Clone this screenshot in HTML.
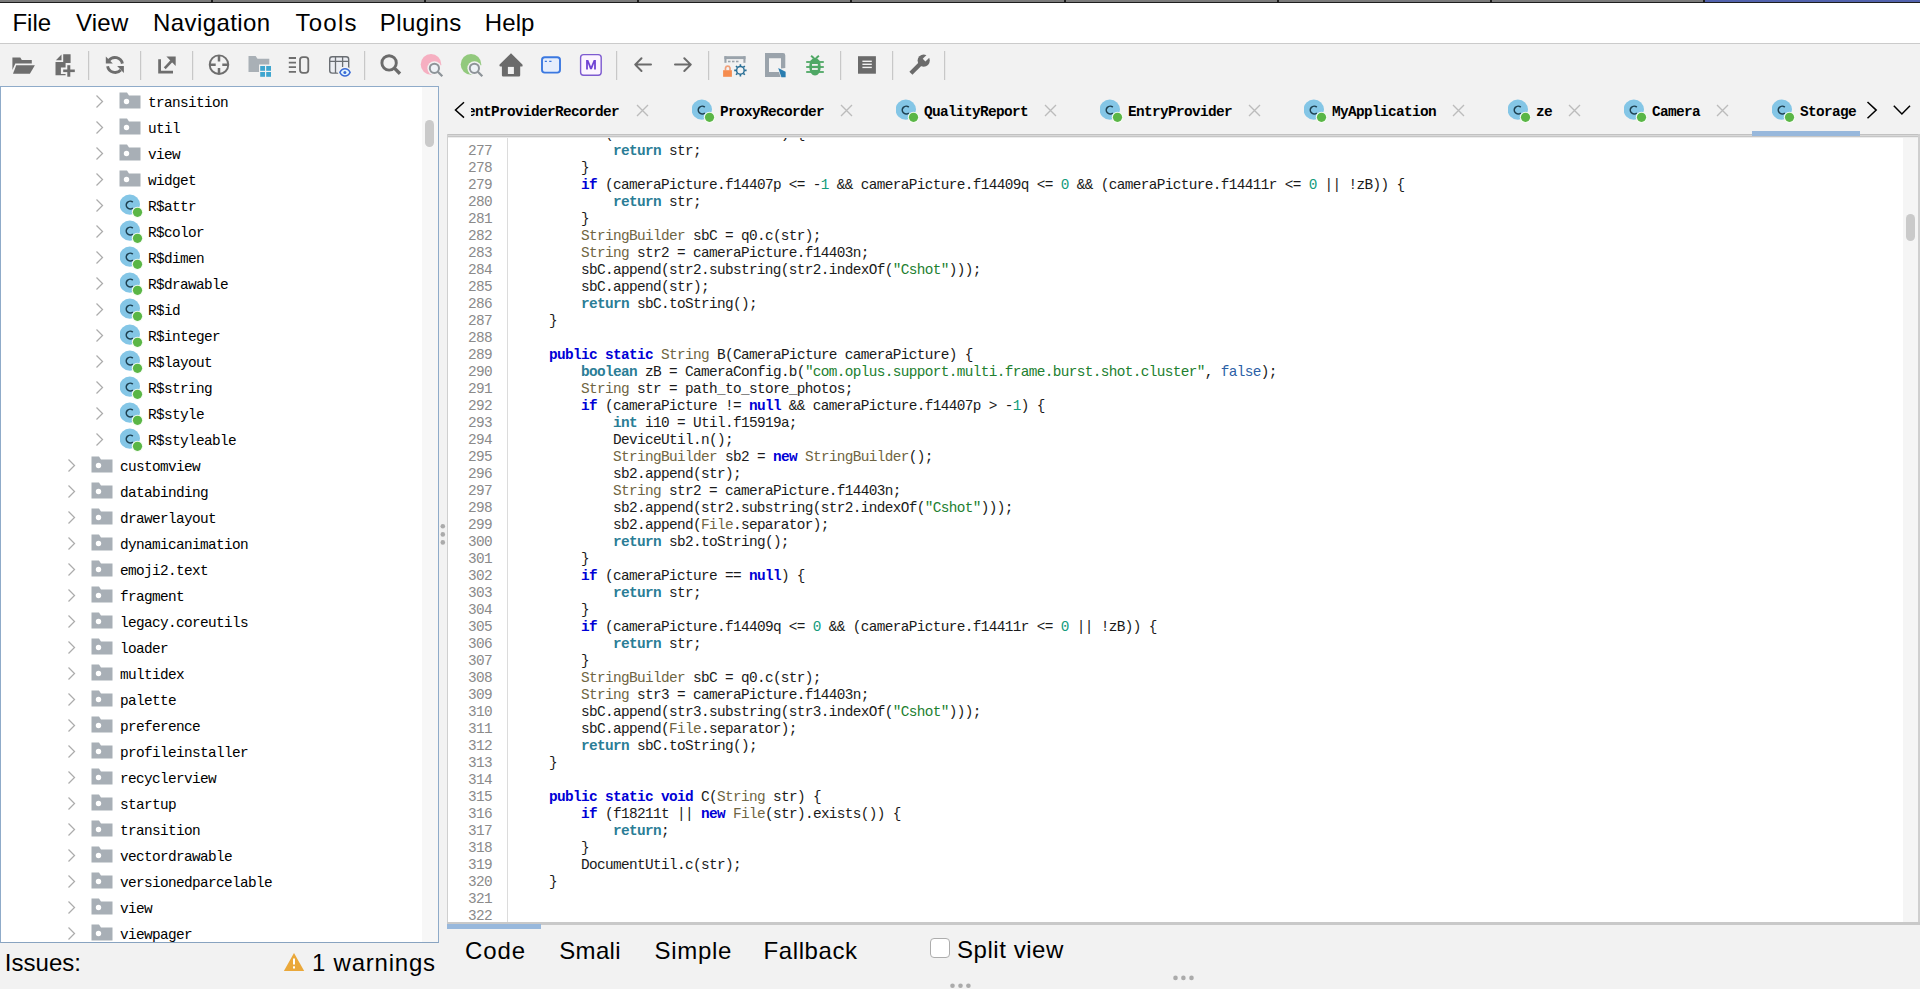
<!DOCTYPE html>
<html><head><meta charset="utf-8">
<style>
*{margin:0;padding:0;box-sizing:border-box}
html,body{width:1920px;height:989px;overflow:hidden;background:#f2f2f2;font-family:"Liberation Sans",sans-serif;color:#000}
.abs{position:absolute}
#topstrip{position:absolute;left:0;top:0;width:1920px;height:3px;background:#7b7b7b;border-bottom:1px solid #1e1e1e}
#menubar{position:absolute;left:0;top:3px;width:1920px;height:41px;background:#fff;border-bottom:1px solid #cbcbcb}
.mi{position:absolute;top:8.5px;font-size:24px;line-height:28px;color:#000}
#toolbar{position:absolute;left:0;top:44px;width:1920px;height:43px;background:#f2f2f2}
.sep{position:absolute;top:50px;width:1px;height:30px;background:#c9c9c9}
.tb{position:absolute}
#tree{position:absolute;left:0;top:86px;width:439px;height:857px;background:#fff;border:1px solid #8fabc9;border-bottom:1.5px solid #88a3c0;overflow:hidden}
#tree .inner{position:absolute;left:-1px;top:-87px;width:439px;height:989px}
.chev,.ico{position:absolute;line-height:0}
.tt{position:absolute;font-family:"Liberation Mono",monospace;font-size:14.4px;letter-spacing:-0.64px;line-height:26px;color:#000;white-space:pre}
#tsb{position:absolute;left:421px;top:0;width:16px;height:855px;background:#f7f7f7}
#tthumb{position:absolute;left:425px;top:120px;width:9px;height:27px;border-radius:5px;background:#cacaca}
.tab{position:absolute;font-family:"Liberation Mono",monospace;font-weight:bold;font-size:14.4px;letter-spacing:-0.64px;line-height:26px;color:#000;white-space:pre}
#code{position:absolute;left:447px;top:134px;width:1473px;height:791px;background:#fff;border-top:0;border-left:1px solid #cfcfcf;border-right:2px solid #cfcfcf;overflow:hidden}
#code .inner{position:absolute;left:-448px;top:-134px;width:1920px;height:989px}
.ln{position:absolute;left:517px;height:17px;font-family:"Liberation Mono",monospace;font-size:14.4px;letter-spacing:-0.64px;line-height:17px;color:#1a1a1a;white-space:pre}
.num{position:absolute;left:448px;width:44px;text-align:right;height:17px;font-family:"Liberation Mono",monospace;font-size:14.4px;letter-spacing:-0.64px;line-height:17px;color:#8a8a8a}
#gsep{position:absolute;left:507px;top:136px;width:1px;height:800px;background:#dcdcdc}
.k{color:#0000d6;font-weight:bold}
.t{color:#2a7d96;font-weight:bold}
.c{color:#6f6542}
.s{color:#21802f}
.n{color:#139c7c}
.b{color:#2b5fa6}
#csb{position:absolute;left:1903px;top:136px;width:16px;height:789px;background:#f5f5f5}
#cthumb{position:absolute;left:1906px;top:214px;width:9px;height:27px;border-radius:5px;background:#cacaca}
.bt{position:absolute;font-size:24px;line-height:28px;color:#000}
</style></head><body>
<div id="topstrip"></div>
<div class="abs" style="left:1705px;top:0;width:215px;height:2px;background:#5262ad"></div>
<div class="abs" style="left:211px;top:0;width:2px;height:3px;background:#1e1e1e"></div><div class="abs" style="left:424px;top:0;width:2px;height:3px;background:#1e1e1e"></div><div class="abs" style="left:637px;top:0;width:2px;height:3px;background:#1e1e1e"></div><div class="abs" style="left:850px;top:0;width:2px;height:3px;background:#1e1e1e"></div><div class="abs" style="left:1064px;top:0;width:2px;height:3px;background:#1e1e1e"></div><div class="abs" style="left:1277px;top:0;width:2px;height:3px;background:#1e1e1e"></div><div class="abs" style="left:1490px;top:0;width:2px;height:3px;background:#1e1e1e"></div><div class="abs" style="left:1703px;top:0;width:2px;height:3px;background:#1e1e1e"></div>
<div id="menubar"></div>
<div class="mi" style="left:12.4px;letter-spacing:0px">File</div>
<div class="mi" style="left:76px;letter-spacing:0.23px">View</div>
<div class="mi" style="left:153px;letter-spacing:0.42px">Navigation</div>
<div class="mi" style="left:295.5px;letter-spacing:1.23px">Tools</div>
<div class="mi" style="left:379.8px;letter-spacing:0.46px">Plugins</div>
<div class="mi" style="left:484.8px;letter-spacing:0.1px">Help</div>
<div id="toolbar"></div>
<svg class="abs" style="left:0;top:0" width="1920" height="989" viewBox="0 0 1920 989">
<g fill="#c8c8c8">
<rect x="88" y="51" width="1.2" height="29"/><rect x="140" y="51" width="1.2" height="29"/><rect x="192" y="51" width="1.2" height="29"/>
<rect x="364" y="51" width="1.2" height="29"/><rect x="616" y="51" width="1.2" height="29"/><rect x="708" y="51" width="1.2" height="29"/>
<rect x="840" y="51" width="1.2" height="29"/><rect x="892" y="51" width="1.2" height="29"/><rect x="944" y="51" width="1.2" height="29"/>
</g>
<!-- open folder -->
<g fill="#6e6e6e">
<path d="M12.4 57.5 H20.3 L21.8 60 H31.8 V63.6 H15.3 L12.4 70 Z"/>
<path d="M16.2 65.2 H34.9 L29.9 73.8 H13 Z"/>
</g>
<!-- add file -->
<g fill="#6e6e6e">
<path d="M63.2 54.2 H70.6 V63 H65.6 V67.4 H60.9 V74 H65.6 V75.2 H55.5 V62.1 H63.2 Z"/>
<path d="M55.9 60.3 L61.5 54.5 V60.3 Z"/>
<rect x="63.2" y="69.5" width="11.6" height="2.6"/><rect x="67.3" y="65.2" width="3" height="11.5"/>
</g>
<!-- refresh -->
<g fill="none" stroke="#6e6e6e" stroke-width="2.9">
<path d="M108.9 60.4 A7.65 7.65 0 0 1 122.4 63.6"/>
<path d="M107.6 66.2 A7.65 7.65 0 0 0 120.8 70"/>
</g>
<g fill="#6e6e6e"><path d="M105.8 56.6 V63.6 H112.8 Z"/><path d="M117.1 66 H123.9 V73 Z"/></g>
<!-- export -->
<g fill="#6e6e6e">
<path d="M158.2 59.3 H161 V70.8 H173 V73.6 H158.2 Z"/>
<path d="M166.4 56.6 H175.7 V65.9 Z"/>
</g>
<path d="M165.6 67.3 L172.3 60.2" stroke="#6e6e6e" stroke-width="2.6" stroke-linecap="square"/>
<!-- crosshair -->
<circle cx="219" cy="64.7" r="9.3" fill="none" stroke="#6e6e6e" stroke-width="1.9"/>
<path d="M219 55.4 V61.4 M219 68 V74 M209.7 64.7 H215.7 M222.3 64.7 H228.3" stroke="#6e6e6e" stroke-width="2.5"/>
<!-- folder w grid -->
<path d="M248.5 56 H255.6 L257.5 58.8 H269.3 V64.5 H259 V72 H248.5 Z" fill="#a9b0b6"/>
<g fill="#3fa6cf"><rect x="260.2" y="66" width="4.8" height="4.8"/><rect x="266.2" y="66" width="4.8" height="4.8"/><rect x="260.2" y="72" width="4.8" height="4.8"/><rect x="266.2" y="72" width="4.8" height="4.8"/></g>
<!-- lines + rect -->
<path d="M288.8 58 H296 M288.8 62.6 H296 M288.8 67.2 H296 M288.8 71.8 H296" stroke="#6e6e6e" stroke-width="1.8"/>
<rect x="300" y="57.2" width="8.3" height="15.7" rx="2.8" fill="none" stroke="#6e6e6e" stroke-width="1.8"/>
<!-- table eye -->
<rect x="329.7" y="56.8" width="19" height="16.3" rx="2.6" fill="#eceef3" stroke="#6a6e73" stroke-width="1.4"/>
<path d="M329.7 61.35 H348.7 M335.5 56.8 V73.1 M342.6 56.8 V67" stroke="#6a6e73" stroke-width="1.3" fill="none"/>
<path d="M337.6 72.4 C339.5 67.6 342.3 66.8 345 66.8 C347.7 66.8 350.5 67.6 352.4 72.4 C350.5 77.2 347.7 78 345 78 C342.3 78 339.5 77.2 337.6 72.4 Z" fill="#f2f2f2"/>
<path d="M339.9 72.4 C341.5 69.2 343 68.8 345 68.8 C347 68.8 348.5 69.2 350.1 72.4 C348.5 75.6 347 76 345 76 C343 76 341.5 75.6 339.9 72.4 Z" fill="#e4f6fd" stroke="#3a6ad6" stroke-width="1.5"/>
<circle cx="344.9" cy="72.4" r="1.5" fill="#3a6ad6"/>
<!-- search -->
<circle cx="389.1" cy="62.9" r="7.2" fill="none" stroke="#6b6b6b" stroke-width="2.9"/>
<path d="M394.6 68.4 L400 73.8" stroke="#6b6b6b" stroke-width="3.4"/>
<!-- pink search -->
<circle cx="431" cy="64.4" r="10.3" fill="#f6afc1"/>
<circle cx="434.4" cy="68.3" r="7" fill="#f2f2f2"/>
<circle cx="434.4" cy="68.3" r="4.6" fill="#eef2f6" stroke="#8e9499" stroke-width="2"/>
<path d="M437.8 71.7 L442.3 76.2" stroke="#8e9499" stroke-width="2.3"/>
<!-- green search -->
<circle cx="471" cy="64.4" r="10.3" fill="#92c97d"/>
<circle cx="474.4" cy="68.3" r="7" fill="#f2f2f2"/>
<circle cx="474.4" cy="68.3" r="4.6" fill="#eef2f6" stroke="#8e9499" stroke-width="2"/>
<path d="M477.8 71.7 L482.3 76.2" stroke="#8e9499" stroke-width="2.3"/>
<!-- home -->
<path d="M511 53.2 L499.6 64.6 Q498.9 66.6 500.6 66.6 H501.9 V75.3 Q501.9 76.6 503.2 76.6 H518.9 Q520.2 76.6 520.2 75.3 V66.6 H521.5 Q523.1 66.6 522.4 64.6 Z" fill="#6b6b6b"/>
<rect x="507.9" y="66.9" width="6" height="7.1" fill="#f2f2f2"/>
<!-- window -->
<rect x="542" y="57.2" width="18" height="15.4" rx="2.8" fill="#e6eefc" stroke="#3b78e0" stroke-width="1.9"/>
<path d="M544.8 61.3 H546.9 M549.2 61.3 H551.5" stroke="#3b78e0" stroke-width="1.3"/>
<!-- M -->
<rect x="580.6" y="54.6" width="20.6" height="20.6" rx="3" fill="#fcf4ff" stroke="#7d5ad0" stroke-width="1.4"/>
<path d="M586.1 69.4 V60 H588.3 L591 66.6 L593.7 60 H595.9 V69.4 H594.1 V63.4 L591.9 69.3 H590.1 L587.9 63.4 V69.4 Z" fill="#7043d4"/>
<!-- arrows -->
<g fill="none" stroke="#6b6b6b" stroke-width="2" stroke-linecap="round" stroke-linejoin="round">
<path d="M641.5 58.2 L635.2 64.6 L641.5 71 M635.2 64.6 H651"/>
<path d="M684.3 58.2 L690.8 64.6 L684.3 71 M690.8 64.6 H675"/>
</g>
<!-- lock gear -->
<g fill="#9aa3ab">
<rect x="724.4" y="56.2" width="21.1" height="2.9"/><rect x="724.4" y="56.2" width="2.1" height="6.6"/><rect x="743.4" y="56.2" width="2.1" height="6.6"/>
<rect x="728" y="60.7" width="2.5" height="1.6"/><rect x="732" y="60.7" width="2.5" height="1.6"/><rect x="736" y="60.7" width="2.5" height="1.6"/>
</g>
<path d="M725.5 70.5 V68 A2.3 2.3 0 0 1 730 68 V70.5" fill="none" stroke="#f0a07a" stroke-width="1.7"/>
<rect x="723.1" y="70.2" width="8.8" height="6.6" fill="#f58c4f"/>
<g stroke="#2a6f96" stroke-width="1.5" fill="none">
<circle cx="740.4" cy="70.4" r="3.8"/>
<path d="M740.4 64.2 V66.2 M740.4 74.6 V76.6 M734.2 70.4 H736.2 M744.6 70.4 H746.6 M736 66 L737.4 67.4 M743.4 73.4 L744.8 74.8 M744.8 66 L743.4 67.4 M737.4 73.4 L736 74.8" stroke-width="1.6"/>
</g>
<!-- page pen -->
<path d="M765 53.1 H783 Q785.3 53.1 785.3 55.4 V68 L781 68.6 V58.2 H769 V71.9 H779 L780.6 77 H765 Z" fill="#9aa3ab"/>
<path d="M778.2 68 L785.6 71.8 V77.2 H781.4 Z" fill="#2a7db0"/>
<!-- bug -->
<g fill="#4fa865">
<ellipse cx="815" cy="66.6" rx="5.8" ry="8.9"/>
<rect x="806.2" y="61.1" width="17.6" height="1.8"/><rect x="806.2" y="66.1" width="17.6" height="1.8"/><rect x="806.2" y="71.1" width="17.6" height="1.8"/>
</g>
<path d="M811.1 55.8 L814 58.2 M818.9 55.8 L816 58.2" stroke="#4fa865" stroke-width="2"/>
<g fill="#f2f2f2"><rect x="812" y="64" width="5.8" height="1.8"/><rect x="812" y="68.1" width="5.8" height="1.8"/></g>
<!-- doc box -->
<rect x="858" y="56.2" width="17.9" height="17.5" fill="#6b6b6b"/>
<g fill="#f2f2f2"><rect x="862.4" y="60.6" width="9.4" height="1.4"/><rect x="862.4" y="63.6" width="9.4" height="1.4"/><rect x="862.4" y="66.7" width="9.4" height="1.4"/></g>
<!-- wrench -->
<path d="M910.9 73.3 L921.2 63" stroke="#6b6b6b" stroke-width="4.4"/>
<circle cx="923.7" cy="60.6" r="6.1" fill="#6b6b6b"/>
<rect x="-1.9" y="-8" width="3.8" height="8.3" fill="#f2f2f2" transform="translate(924.3 60) rotate(45)"/>
<!-- tab arrows -->
<g fill="none" stroke="#000" stroke-width="1.5">
<path d="M464 102.3 L455.5 110 L464 117.6"/>
<path d="M1867.5 102 L1876.2 110.1 L1867.5 118.2"/>
<path d="M1893.8 105.8 L1901.9 114 L1910 105.8"/>
</g>
<!-- splitter dots -->
<g fill="#ababab">
<circle cx="442.8" cy="526.3" r="2.3"/><circle cx="442.8" cy="534.4" r="2.3"/><circle cx="442.8" cy="542.4" r="2.3"/>
<circle cx="952.5" cy="985.8" r="2.3"/><circle cx="960.5" cy="985.8" r="2.3"/><circle cx="968.4" cy="985.8" r="2.3"/>
<circle cx="1175.5" cy="977.9" r="2.3"/><circle cx="1183.4" cy="977.9" r="2.3"/><circle cx="1191.5" cy="977.9" r="2.3"/>
</g>
<!-- warning -->
<path d="M294 953 L304.2 971 H283.9 Z" fill="#eaa83a"/>
<rect x="293" y="958.5" width="2" height="6" fill="#fff"/><rect x="293" y="966.3" width="2" height="2.2" fill="#fff"/>
</svg>

<div id="tree"><div class="inner">
<div class="chev" style="left:95px;top:94px"><svg width="9" height="15" viewBox="0 0 9 15"><path d="M1.5 1.5 L7.5 7.5 L1.5 13.5" fill="none" stroke="#acacac" stroke-width="1.25"/></svg></div>
<div class="ico" style="left:119px;top:92px"><svg width="22" height="17" viewBox="0 0 22 17"><path d="M0.5 0.5 H8 L10 3.5 H21.5 V16.5 H0.5 Z" fill="#a8afb6"/><circle cx="7.5" cy="9.5" r="2.7" fill="#fff"/></svg></div>
<div class="tt" style="left:148px;top:90px">transition</div>
<div class="chev" style="left:95px;top:120px"><svg width="9" height="15" viewBox="0 0 9 15"><path d="M1.5 1.5 L7.5 7.5 L1.5 13.5" fill="none" stroke="#acacac" stroke-width="1.25"/></svg></div>
<div class="ico" style="left:119px;top:118px"><svg width="22" height="17" viewBox="0 0 22 17"><path d="M0.5 0.5 H8 L10 3.5 H21.5 V16.5 H0.5 Z" fill="#a8afb6"/><circle cx="7.5" cy="9.5" r="2.7" fill="#fff"/></svg></div>
<div class="tt" style="left:148px;top:116px">util</div>
<div class="chev" style="left:95px;top:146px"><svg width="9" height="15" viewBox="0 0 9 15"><path d="M1.5 1.5 L7.5 7.5 L1.5 13.5" fill="none" stroke="#acacac" stroke-width="1.25"/></svg></div>
<div class="ico" style="left:119px;top:144px"><svg width="22" height="17" viewBox="0 0 22 17"><path d="M0.5 0.5 H8 L10 3.5 H21.5 V16.5 H0.5 Z" fill="#a8afb6"/><circle cx="7.5" cy="9.5" r="2.7" fill="#fff"/></svg></div>
<div class="tt" style="left:148px;top:142px">view</div>
<div class="chev" style="left:95px;top:172px"><svg width="9" height="15" viewBox="0 0 9 15"><path d="M1.5 1.5 L7.5 7.5 L1.5 13.5" fill="none" stroke="#acacac" stroke-width="1.25"/></svg></div>
<div class="ico" style="left:119px;top:170px"><svg width="22" height="17" viewBox="0 0 22 17"><path d="M0.5 0.5 H8 L10 3.5 H21.5 V16.5 H0.5 Z" fill="#a8afb6"/><circle cx="7.5" cy="9.5" r="2.7" fill="#fff"/></svg></div>
<div class="tt" style="left:148px;top:168px">widget</div>
<div class="chev" style="left:95px;top:198px"><svg width="9" height="15" viewBox="0 0 9 15"><path d="M1.5 1.5 L7.5 7.5 L1.5 13.5" fill="none" stroke="#acacac" stroke-width="1.25"/></svg></div>
<div class="ico" style="left:120px;top:194px"><svg width="27" height="27" viewBox="0 0 27 27"><circle cx="9.8" cy="10.6" r="10.2" fill="#84c6e6"/><path d="M12.8 8.2 A3.9 3.9 0 1 0 12.8 14.0" fill="none" stroke="#1d3f4f" stroke-width="1.6"/><circle cx="17.5" cy="18.35" r="5.7" fill="#f4fbf2"/><circle cx="17.5" cy="18.35" r="4.6" fill="#5ab646"/></svg></div>
<div class="tt" style="left:148px;top:194px">R$attr</div>
<div class="chev" style="left:95px;top:224px"><svg width="9" height="15" viewBox="0 0 9 15"><path d="M1.5 1.5 L7.5 7.5 L1.5 13.5" fill="none" stroke="#acacac" stroke-width="1.25"/></svg></div>
<div class="ico" style="left:120px;top:220px"><svg width="27" height="27" viewBox="0 0 27 27"><circle cx="9.8" cy="10.6" r="10.2" fill="#84c6e6"/><path d="M12.8 8.2 A3.9 3.9 0 1 0 12.8 14.0" fill="none" stroke="#1d3f4f" stroke-width="1.6"/><circle cx="17.5" cy="18.35" r="5.7" fill="#f4fbf2"/><circle cx="17.5" cy="18.35" r="4.6" fill="#5ab646"/></svg></div>
<div class="tt" style="left:148px;top:220px">R$color</div>
<div class="chev" style="left:95px;top:250px"><svg width="9" height="15" viewBox="0 0 9 15"><path d="M1.5 1.5 L7.5 7.5 L1.5 13.5" fill="none" stroke="#acacac" stroke-width="1.25"/></svg></div>
<div class="ico" style="left:120px;top:246px"><svg width="27" height="27" viewBox="0 0 27 27"><circle cx="9.8" cy="10.6" r="10.2" fill="#84c6e6"/><path d="M12.8 8.2 A3.9 3.9 0 1 0 12.8 14.0" fill="none" stroke="#1d3f4f" stroke-width="1.6"/><circle cx="17.5" cy="18.35" r="5.7" fill="#f4fbf2"/><circle cx="17.5" cy="18.35" r="4.6" fill="#5ab646"/></svg></div>
<div class="tt" style="left:148px;top:246px">R$dimen</div>
<div class="chev" style="left:95px;top:276px"><svg width="9" height="15" viewBox="0 0 9 15"><path d="M1.5 1.5 L7.5 7.5 L1.5 13.5" fill="none" stroke="#acacac" stroke-width="1.25"/></svg></div>
<div class="ico" style="left:120px;top:272px"><svg width="27" height="27" viewBox="0 0 27 27"><circle cx="9.8" cy="10.6" r="10.2" fill="#84c6e6"/><path d="M12.8 8.2 A3.9 3.9 0 1 0 12.8 14.0" fill="none" stroke="#1d3f4f" stroke-width="1.6"/><circle cx="17.5" cy="18.35" r="5.7" fill="#f4fbf2"/><circle cx="17.5" cy="18.35" r="4.6" fill="#5ab646"/></svg></div>
<div class="tt" style="left:148px;top:272px">R$drawable</div>
<div class="chev" style="left:95px;top:302px"><svg width="9" height="15" viewBox="0 0 9 15"><path d="M1.5 1.5 L7.5 7.5 L1.5 13.5" fill="none" stroke="#acacac" stroke-width="1.25"/></svg></div>
<div class="ico" style="left:120px;top:298px"><svg width="27" height="27" viewBox="0 0 27 27"><circle cx="9.8" cy="10.6" r="10.2" fill="#84c6e6"/><path d="M12.8 8.2 A3.9 3.9 0 1 0 12.8 14.0" fill="none" stroke="#1d3f4f" stroke-width="1.6"/><circle cx="17.5" cy="18.35" r="5.7" fill="#f4fbf2"/><circle cx="17.5" cy="18.35" r="4.6" fill="#5ab646"/></svg></div>
<div class="tt" style="left:148px;top:298px">R$id</div>
<div class="chev" style="left:95px;top:328px"><svg width="9" height="15" viewBox="0 0 9 15"><path d="M1.5 1.5 L7.5 7.5 L1.5 13.5" fill="none" stroke="#acacac" stroke-width="1.25"/></svg></div>
<div class="ico" style="left:120px;top:324px"><svg width="27" height="27" viewBox="0 0 27 27"><circle cx="9.8" cy="10.6" r="10.2" fill="#84c6e6"/><path d="M12.8 8.2 A3.9 3.9 0 1 0 12.8 14.0" fill="none" stroke="#1d3f4f" stroke-width="1.6"/><circle cx="17.5" cy="18.35" r="5.7" fill="#f4fbf2"/><circle cx="17.5" cy="18.35" r="4.6" fill="#5ab646"/></svg></div>
<div class="tt" style="left:148px;top:324px">R$integer</div>
<div class="chev" style="left:95px;top:354px"><svg width="9" height="15" viewBox="0 0 9 15"><path d="M1.5 1.5 L7.5 7.5 L1.5 13.5" fill="none" stroke="#acacac" stroke-width="1.25"/></svg></div>
<div class="ico" style="left:120px;top:350px"><svg width="27" height="27" viewBox="0 0 27 27"><circle cx="9.8" cy="10.6" r="10.2" fill="#84c6e6"/><path d="M12.8 8.2 A3.9 3.9 0 1 0 12.8 14.0" fill="none" stroke="#1d3f4f" stroke-width="1.6"/><circle cx="17.5" cy="18.35" r="5.7" fill="#f4fbf2"/><circle cx="17.5" cy="18.35" r="4.6" fill="#5ab646"/></svg></div>
<div class="tt" style="left:148px;top:350px">R$layout</div>
<div class="chev" style="left:95px;top:380px"><svg width="9" height="15" viewBox="0 0 9 15"><path d="M1.5 1.5 L7.5 7.5 L1.5 13.5" fill="none" stroke="#acacac" stroke-width="1.25"/></svg></div>
<div class="ico" style="left:120px;top:376px"><svg width="27" height="27" viewBox="0 0 27 27"><circle cx="9.8" cy="10.6" r="10.2" fill="#84c6e6"/><path d="M12.8 8.2 A3.9 3.9 0 1 0 12.8 14.0" fill="none" stroke="#1d3f4f" stroke-width="1.6"/><circle cx="17.5" cy="18.35" r="5.7" fill="#f4fbf2"/><circle cx="17.5" cy="18.35" r="4.6" fill="#5ab646"/></svg></div>
<div class="tt" style="left:148px;top:376px">R$string</div>
<div class="chev" style="left:95px;top:406px"><svg width="9" height="15" viewBox="0 0 9 15"><path d="M1.5 1.5 L7.5 7.5 L1.5 13.5" fill="none" stroke="#acacac" stroke-width="1.25"/></svg></div>
<div class="ico" style="left:120px;top:402px"><svg width="27" height="27" viewBox="0 0 27 27"><circle cx="9.8" cy="10.6" r="10.2" fill="#84c6e6"/><path d="M12.8 8.2 A3.9 3.9 0 1 0 12.8 14.0" fill="none" stroke="#1d3f4f" stroke-width="1.6"/><circle cx="17.5" cy="18.35" r="5.7" fill="#f4fbf2"/><circle cx="17.5" cy="18.35" r="4.6" fill="#5ab646"/></svg></div>
<div class="tt" style="left:148px;top:402px">R$style</div>
<div class="chev" style="left:95px;top:432px"><svg width="9" height="15" viewBox="0 0 9 15"><path d="M1.5 1.5 L7.5 7.5 L1.5 13.5" fill="none" stroke="#acacac" stroke-width="1.25"/></svg></div>
<div class="ico" style="left:120px;top:428px"><svg width="27" height="27" viewBox="0 0 27 27"><circle cx="9.8" cy="10.6" r="10.2" fill="#84c6e6"/><path d="M12.8 8.2 A3.9 3.9 0 1 0 12.8 14.0" fill="none" stroke="#1d3f4f" stroke-width="1.6"/><circle cx="17.5" cy="18.35" r="5.7" fill="#f4fbf2"/><circle cx="17.5" cy="18.35" r="4.6" fill="#5ab646"/></svg></div>
<div class="tt" style="left:148px;top:428px">R$styleable</div>
<div class="chev" style="left:67px;top:458px"><svg width="9" height="15" viewBox="0 0 9 15"><path d="M1.5 1.5 L7.5 7.5 L1.5 13.5" fill="none" stroke="#acacac" stroke-width="1.25"/></svg></div>
<div class="ico" style="left:91px;top:456px"><svg width="22" height="17" viewBox="0 0 22 17"><path d="M0.5 0.5 H8 L10 3.5 H21.5 V16.5 H0.5 Z" fill="#a8afb6"/><circle cx="7.5" cy="9.5" r="2.7" fill="#fff"/></svg></div>
<div class="tt" style="left:120px;top:454px">customview</div>
<div class="chev" style="left:67px;top:484px"><svg width="9" height="15" viewBox="0 0 9 15"><path d="M1.5 1.5 L7.5 7.5 L1.5 13.5" fill="none" stroke="#acacac" stroke-width="1.25"/></svg></div>
<div class="ico" style="left:91px;top:482px"><svg width="22" height="17" viewBox="0 0 22 17"><path d="M0.5 0.5 H8 L10 3.5 H21.5 V16.5 H0.5 Z" fill="#a8afb6"/><circle cx="7.5" cy="9.5" r="2.7" fill="#fff"/></svg></div>
<div class="tt" style="left:120px;top:480px">databinding</div>
<div class="chev" style="left:67px;top:510px"><svg width="9" height="15" viewBox="0 0 9 15"><path d="M1.5 1.5 L7.5 7.5 L1.5 13.5" fill="none" stroke="#acacac" stroke-width="1.25"/></svg></div>
<div class="ico" style="left:91px;top:508px"><svg width="22" height="17" viewBox="0 0 22 17"><path d="M0.5 0.5 H8 L10 3.5 H21.5 V16.5 H0.5 Z" fill="#a8afb6"/><circle cx="7.5" cy="9.5" r="2.7" fill="#fff"/></svg></div>
<div class="tt" style="left:120px;top:506px">drawerlayout</div>
<div class="chev" style="left:67px;top:536px"><svg width="9" height="15" viewBox="0 0 9 15"><path d="M1.5 1.5 L7.5 7.5 L1.5 13.5" fill="none" stroke="#acacac" stroke-width="1.25"/></svg></div>
<div class="ico" style="left:91px;top:534px"><svg width="22" height="17" viewBox="0 0 22 17"><path d="M0.5 0.5 H8 L10 3.5 H21.5 V16.5 H0.5 Z" fill="#a8afb6"/><circle cx="7.5" cy="9.5" r="2.7" fill="#fff"/></svg></div>
<div class="tt" style="left:120px;top:532px">dynamicanimation</div>
<div class="chev" style="left:67px;top:562px"><svg width="9" height="15" viewBox="0 0 9 15"><path d="M1.5 1.5 L7.5 7.5 L1.5 13.5" fill="none" stroke="#acacac" stroke-width="1.25"/></svg></div>
<div class="ico" style="left:91px;top:560px"><svg width="22" height="17" viewBox="0 0 22 17"><path d="M0.5 0.5 H8 L10 3.5 H21.5 V16.5 H0.5 Z" fill="#a8afb6"/><circle cx="7.5" cy="9.5" r="2.7" fill="#fff"/></svg></div>
<div class="tt" style="left:120px;top:558px">emoji2.text</div>
<div class="chev" style="left:67px;top:588px"><svg width="9" height="15" viewBox="0 0 9 15"><path d="M1.5 1.5 L7.5 7.5 L1.5 13.5" fill="none" stroke="#acacac" stroke-width="1.25"/></svg></div>
<div class="ico" style="left:91px;top:586px"><svg width="22" height="17" viewBox="0 0 22 17"><path d="M0.5 0.5 H8 L10 3.5 H21.5 V16.5 H0.5 Z" fill="#a8afb6"/><circle cx="7.5" cy="9.5" r="2.7" fill="#fff"/></svg></div>
<div class="tt" style="left:120px;top:584px">fragment</div>
<div class="chev" style="left:67px;top:614px"><svg width="9" height="15" viewBox="0 0 9 15"><path d="M1.5 1.5 L7.5 7.5 L1.5 13.5" fill="none" stroke="#acacac" stroke-width="1.25"/></svg></div>
<div class="ico" style="left:91px;top:612px"><svg width="22" height="17" viewBox="0 0 22 17"><path d="M0.5 0.5 H8 L10 3.5 H21.5 V16.5 H0.5 Z" fill="#a8afb6"/><circle cx="7.5" cy="9.5" r="2.7" fill="#fff"/></svg></div>
<div class="tt" style="left:120px;top:610px">legacy.coreutils</div>
<div class="chev" style="left:67px;top:640px"><svg width="9" height="15" viewBox="0 0 9 15"><path d="M1.5 1.5 L7.5 7.5 L1.5 13.5" fill="none" stroke="#acacac" stroke-width="1.25"/></svg></div>
<div class="ico" style="left:91px;top:638px"><svg width="22" height="17" viewBox="0 0 22 17"><path d="M0.5 0.5 H8 L10 3.5 H21.5 V16.5 H0.5 Z" fill="#a8afb6"/><circle cx="7.5" cy="9.5" r="2.7" fill="#fff"/></svg></div>
<div class="tt" style="left:120px;top:636px">loader</div>
<div class="chev" style="left:67px;top:666px"><svg width="9" height="15" viewBox="0 0 9 15"><path d="M1.5 1.5 L7.5 7.5 L1.5 13.5" fill="none" stroke="#acacac" stroke-width="1.25"/></svg></div>
<div class="ico" style="left:91px;top:664px"><svg width="22" height="17" viewBox="0 0 22 17"><path d="M0.5 0.5 H8 L10 3.5 H21.5 V16.5 H0.5 Z" fill="#a8afb6"/><circle cx="7.5" cy="9.5" r="2.7" fill="#fff"/></svg></div>
<div class="tt" style="left:120px;top:662px">multidex</div>
<div class="chev" style="left:67px;top:692px"><svg width="9" height="15" viewBox="0 0 9 15"><path d="M1.5 1.5 L7.5 7.5 L1.5 13.5" fill="none" stroke="#acacac" stroke-width="1.25"/></svg></div>
<div class="ico" style="left:91px;top:690px"><svg width="22" height="17" viewBox="0 0 22 17"><path d="M0.5 0.5 H8 L10 3.5 H21.5 V16.5 H0.5 Z" fill="#a8afb6"/><circle cx="7.5" cy="9.5" r="2.7" fill="#fff"/></svg></div>
<div class="tt" style="left:120px;top:688px">palette</div>
<div class="chev" style="left:67px;top:718px"><svg width="9" height="15" viewBox="0 0 9 15"><path d="M1.5 1.5 L7.5 7.5 L1.5 13.5" fill="none" stroke="#acacac" stroke-width="1.25"/></svg></div>
<div class="ico" style="left:91px;top:716px"><svg width="22" height="17" viewBox="0 0 22 17"><path d="M0.5 0.5 H8 L10 3.5 H21.5 V16.5 H0.5 Z" fill="#a8afb6"/><circle cx="7.5" cy="9.5" r="2.7" fill="#fff"/></svg></div>
<div class="tt" style="left:120px;top:714px">preference</div>
<div class="chev" style="left:67px;top:744px"><svg width="9" height="15" viewBox="0 0 9 15"><path d="M1.5 1.5 L7.5 7.5 L1.5 13.5" fill="none" stroke="#acacac" stroke-width="1.25"/></svg></div>
<div class="ico" style="left:91px;top:742px"><svg width="22" height="17" viewBox="0 0 22 17"><path d="M0.5 0.5 H8 L10 3.5 H21.5 V16.5 H0.5 Z" fill="#a8afb6"/><circle cx="7.5" cy="9.5" r="2.7" fill="#fff"/></svg></div>
<div class="tt" style="left:120px;top:740px">profileinstaller</div>
<div class="chev" style="left:67px;top:770px"><svg width="9" height="15" viewBox="0 0 9 15"><path d="M1.5 1.5 L7.5 7.5 L1.5 13.5" fill="none" stroke="#acacac" stroke-width="1.25"/></svg></div>
<div class="ico" style="left:91px;top:768px"><svg width="22" height="17" viewBox="0 0 22 17"><path d="M0.5 0.5 H8 L10 3.5 H21.5 V16.5 H0.5 Z" fill="#a8afb6"/><circle cx="7.5" cy="9.5" r="2.7" fill="#fff"/></svg></div>
<div class="tt" style="left:120px;top:766px">recyclerview</div>
<div class="chev" style="left:67px;top:796px"><svg width="9" height="15" viewBox="0 0 9 15"><path d="M1.5 1.5 L7.5 7.5 L1.5 13.5" fill="none" stroke="#acacac" stroke-width="1.25"/></svg></div>
<div class="ico" style="left:91px;top:794px"><svg width="22" height="17" viewBox="0 0 22 17"><path d="M0.5 0.5 H8 L10 3.5 H21.5 V16.5 H0.5 Z" fill="#a8afb6"/><circle cx="7.5" cy="9.5" r="2.7" fill="#fff"/></svg></div>
<div class="tt" style="left:120px;top:792px">startup</div>
<div class="chev" style="left:67px;top:822px"><svg width="9" height="15" viewBox="0 0 9 15"><path d="M1.5 1.5 L7.5 7.5 L1.5 13.5" fill="none" stroke="#acacac" stroke-width="1.25"/></svg></div>
<div class="ico" style="left:91px;top:820px"><svg width="22" height="17" viewBox="0 0 22 17"><path d="M0.5 0.5 H8 L10 3.5 H21.5 V16.5 H0.5 Z" fill="#a8afb6"/><circle cx="7.5" cy="9.5" r="2.7" fill="#fff"/></svg></div>
<div class="tt" style="left:120px;top:818px">transition</div>
<div class="chev" style="left:67px;top:848px"><svg width="9" height="15" viewBox="0 0 9 15"><path d="M1.5 1.5 L7.5 7.5 L1.5 13.5" fill="none" stroke="#acacac" stroke-width="1.25"/></svg></div>
<div class="ico" style="left:91px;top:846px"><svg width="22" height="17" viewBox="0 0 22 17"><path d="M0.5 0.5 H8 L10 3.5 H21.5 V16.5 H0.5 Z" fill="#a8afb6"/><circle cx="7.5" cy="9.5" r="2.7" fill="#fff"/></svg></div>
<div class="tt" style="left:120px;top:844px">vectordrawable</div>
<div class="chev" style="left:67px;top:874px"><svg width="9" height="15" viewBox="0 0 9 15"><path d="M1.5 1.5 L7.5 7.5 L1.5 13.5" fill="none" stroke="#acacac" stroke-width="1.25"/></svg></div>
<div class="ico" style="left:91px;top:872px"><svg width="22" height="17" viewBox="0 0 22 17"><path d="M0.5 0.5 H8 L10 3.5 H21.5 V16.5 H0.5 Z" fill="#a8afb6"/><circle cx="7.5" cy="9.5" r="2.7" fill="#fff"/></svg></div>
<div class="tt" style="left:120px;top:870px">versionedparcelable</div>
<div class="chev" style="left:67px;top:900px"><svg width="9" height="15" viewBox="0 0 9 15"><path d="M1.5 1.5 L7.5 7.5 L1.5 13.5" fill="none" stroke="#acacac" stroke-width="1.25"/></svg></div>
<div class="ico" style="left:91px;top:898px"><svg width="22" height="17" viewBox="0 0 22 17"><path d="M0.5 0.5 H8 L10 3.5 H21.5 V16.5 H0.5 Z" fill="#a8afb6"/><circle cx="7.5" cy="9.5" r="2.7" fill="#fff"/></svg></div>
<div class="tt" style="left:120px;top:896px">view</div>
<div class="chev" style="left:67px;top:926px"><svg width="9" height="15" viewBox="0 0 9 15"><path d="M1.5 1.5 L7.5 7.5 L1.5 13.5" fill="none" stroke="#acacac" stroke-width="1.25"/></svg></div>
<div class="ico" style="left:91px;top:924px"><svg width="22" height="17" viewBox="0 0 22 17"><path d="M0.5 0.5 H8 L10 3.5 H21.5 V16.5 H0.5 Z" fill="#a8afb6"/><circle cx="7.5" cy="9.5" r="2.7" fill="#fff"/></svg></div>
<div class="tt" style="left:120px;top:922px">viewpager</div>
</div>
<div id="tsb"></div><div id="tthumb" style="left:424px;top:33px"></div>
</div>
<div class="abs" style="left:471px;top:90px;width:160px;height:40px;overflow:hidden"><div class="tab" style="left:-4px;top:9px">entProviderRecorder</div></div>
<div class="ico" style="left:636px;top:104px"><svg width="13" height="13" viewBox="0 0 13 13"><path d="M1 1 L12 12 M12 1 L1 12" stroke="#bcbcbc" stroke-width="1.35"/></svg></div>
<div class="ico" style="left:692px;top:99px"><svg width="27" height="27" viewBox="0 0 27 27"><circle cx="9.8" cy="10.6" r="10.2" fill="#84c6e6"/><path d="M12.8 8.2 A3.9 3.9 0 1 0 12.8 14.0" fill="none" stroke="#1d3f4f" stroke-width="1.6"/><circle cx="17.5" cy="18.35" r="5.7" fill="#f4fbf2"/><circle cx="17.5" cy="18.35" r="4.6" fill="#5ab646"/></svg></div>
<div class="tab" style="left:720px;top:99px">ProxyRecorder</div>
<div class="ico" style="left:840px;top:104px"><svg width="13" height="13" viewBox="0 0 13 13"><path d="M1 1 L12 12 M12 1 L1 12" stroke="#bcbcbc" stroke-width="1.35"/></svg></div>
<div class="ico" style="left:896px;top:99px"><svg width="27" height="27" viewBox="0 0 27 27"><circle cx="9.8" cy="10.6" r="10.2" fill="#84c6e6"/><path d="M12.8 8.2 A3.9 3.9 0 1 0 12.8 14.0" fill="none" stroke="#1d3f4f" stroke-width="1.6"/><circle cx="17.5" cy="18.35" r="5.7" fill="#f4fbf2"/><circle cx="17.5" cy="18.35" r="4.6" fill="#5ab646"/></svg></div>
<div class="tab" style="left:924px;top:99px">QualityReport</div>
<div class="ico" style="left:1044px;top:104px"><svg width="13" height="13" viewBox="0 0 13 13"><path d="M1 1 L12 12 M12 1 L1 12" stroke="#bcbcbc" stroke-width="1.35"/></svg></div>
<div class="ico" style="left:1100px;top:99px"><svg width="27" height="27" viewBox="0 0 27 27"><circle cx="9.8" cy="10.6" r="10.2" fill="#84c6e6"/><path d="M12.8 8.2 A3.9 3.9 0 1 0 12.8 14.0" fill="none" stroke="#1d3f4f" stroke-width="1.6"/><circle cx="17.5" cy="18.35" r="5.7" fill="#f4fbf2"/><circle cx="17.5" cy="18.35" r="4.6" fill="#5ab646"/></svg></div>
<div class="tab" style="left:1128px;top:99px">EntryProvider</div>
<div class="ico" style="left:1248px;top:104px"><svg width="13" height="13" viewBox="0 0 13 13"><path d="M1 1 L12 12 M12 1 L1 12" stroke="#bcbcbc" stroke-width="1.35"/></svg></div>
<div class="ico" style="left:1304px;top:99px"><svg width="27" height="27" viewBox="0 0 27 27"><circle cx="9.8" cy="10.6" r="10.2" fill="#84c6e6"/><path d="M12.8 8.2 A3.9 3.9 0 1 0 12.8 14.0" fill="none" stroke="#1d3f4f" stroke-width="1.6"/><circle cx="17.5" cy="18.35" r="5.7" fill="#f4fbf2"/><circle cx="17.5" cy="18.35" r="4.6" fill="#5ab646"/></svg></div>
<div class="tab" style="left:1332px;top:99px">MyApplication</div>
<div class="ico" style="left:1452px;top:104px"><svg width="13" height="13" viewBox="0 0 13 13"><path d="M1 1 L12 12 M12 1 L1 12" stroke="#bcbcbc" stroke-width="1.35"/></svg></div>
<div class="ico" style="left:1508px;top:99px"><svg width="27" height="27" viewBox="0 0 27 27"><circle cx="9.8" cy="10.6" r="10.2" fill="#84c6e6"/><path d="M12.8 8.2 A3.9 3.9 0 1 0 12.8 14.0" fill="none" stroke="#1d3f4f" stroke-width="1.6"/><circle cx="17.5" cy="18.35" r="5.7" fill="#f4fbf2"/><circle cx="17.5" cy="18.35" r="4.6" fill="#5ab646"/></svg></div>
<div class="tab" style="left:1536px;top:99px">ze</div>
<div class="ico" style="left:1568px;top:104px"><svg width="13" height="13" viewBox="0 0 13 13"><path d="M1 1 L12 12 M12 1 L1 12" stroke="#bcbcbc" stroke-width="1.35"/></svg></div>
<div class="ico" style="left:1624px;top:99px"><svg width="27" height="27" viewBox="0 0 27 27"><circle cx="9.8" cy="10.6" r="10.2" fill="#84c6e6"/><path d="M12.8 8.2 A3.9 3.9 0 1 0 12.8 14.0" fill="none" stroke="#1d3f4f" stroke-width="1.6"/><circle cx="17.5" cy="18.35" r="5.7" fill="#f4fbf2"/><circle cx="17.5" cy="18.35" r="4.6" fill="#5ab646"/></svg></div>
<div class="tab" style="left:1652px;top:99px">Camera</div>
<div class="ico" style="left:1716px;top:104px"><svg width="13" height="13" viewBox="0 0 13 13"><path d="M1 1 L12 12 M12 1 L1 12" stroke="#bcbcbc" stroke-width="1.35"/></svg></div>
<div class="ico" style="left:1772px;top:99px"><svg width="27" height="27" viewBox="0 0 27 27"><circle cx="9.8" cy="10.6" r="10.2" fill="#84c6e6"/><path d="M12.8 8.2 A3.9 3.9 0 1 0 12.8 14.0" fill="none" stroke="#1d3f4f" stroke-width="1.6"/><circle cx="17.5" cy="18.35" r="5.7" fill="#f4fbf2"/><circle cx="17.5" cy="18.35" r="4.6" fill="#5ab646"/></svg></div>
<div class="tab" style="left:1800px;top:99px">Storage</div>
<div id="code"><div class="inner">
<div class="num" style="top:126px">276</div>
<div class="num" style="top:143px">277</div>
<div class="num" style="top:160px">278</div>
<div class="num" style="top:177px">279</div>
<div class="num" style="top:194px">280</div>
<div class="num" style="top:211px">281</div>
<div class="num" style="top:228px">282</div>
<div class="num" style="top:245px">283</div>
<div class="num" style="top:262px">284</div>
<div class="num" style="top:279px">285</div>
<div class="num" style="top:296px">286</div>
<div class="num" style="top:313px">287</div>
<div class="num" style="top:330px">288</div>
<div class="num" style="top:347px">289</div>
<div class="num" style="top:364px">290</div>
<div class="num" style="top:381px">291</div>
<div class="num" style="top:398px">292</div>
<div class="num" style="top:415px">293</div>
<div class="num" style="top:432px">294</div>
<div class="num" style="top:449px">295</div>
<div class="num" style="top:466px">296</div>
<div class="num" style="top:483px">297</div>
<div class="num" style="top:500px">298</div>
<div class="num" style="top:517px">299</div>
<div class="num" style="top:534px">300</div>
<div class="num" style="top:551px">301</div>
<div class="num" style="top:568px">302</div>
<div class="num" style="top:585px">303</div>
<div class="num" style="top:602px">304</div>
<div class="num" style="top:619px">305</div>
<div class="num" style="top:636px">306</div>
<div class="num" style="top:653px">307</div>
<div class="num" style="top:670px">308</div>
<div class="num" style="top:687px">309</div>
<div class="num" style="top:704px">310</div>
<div class="num" style="top:721px">311</div>
<div class="num" style="top:738px">312</div>
<div class="num" style="top:755px">313</div>
<div class="num" style="top:772px">314</div>
<div class="num" style="top:789px">315</div>
<div class="num" style="top:806px">316</div>
<div class="num" style="top:823px">317</div>
<div class="num" style="top:840px">318</div>
<div class="num" style="top:857px">319</div>
<div class="num" style="top:874px">320</div>
<div class="num" style="top:891px">321</div>
<div class="num" style="top:908px">322</div>
<div id="gsep"></div>
<div class="ln" style="top:126px">        <span class="k">if</span> (cameraPicture == <span class="k">null</span>) {</div>
<div class="ln" style="top:143px">            <span class="t">return</span> str;</div>
<div class="ln" style="top:160px">        }</div>
<div class="ln" style="top:177px">        <span class="k">if</span> (cameraPicture.f14407p &lt;= -<span class="n">1</span> &amp;&amp; cameraPicture.f14409q &lt;= <span class="n">0</span> &amp;&amp; (cameraPicture.f14411r &lt;= <span class="n">0</span> || !zB)) {</div>
<div class="ln" style="top:194px">            <span class="t">return</span> str;</div>
<div class="ln" style="top:211px">        }</div>
<div class="ln" style="top:228px">        <span class="c">StringBuilder</span> sbC = q0.c(str);</div>
<div class="ln" style="top:245px">        <span class="c">String</span> str2 = cameraPicture.f14403n;</div>
<div class="ln" style="top:262px">        sbC.append(str2.substring(str2.indexOf(<span class="s">&quot;Cshot&quot;</span>)));</div>
<div class="ln" style="top:279px">        sbC.append(str);</div>
<div class="ln" style="top:296px">        <span class="t">return</span> sbC.toString();</div>
<div class="ln" style="top:313px">    }</div>
<div class="ln" style="top:330px"></div>
<div class="ln" style="top:347px">    <span class="k">public</span> <span class="k">static</span> <span class="c">String</span> B(CameraPicture cameraPicture) {</div>
<div class="ln" style="top:364px">        <span class="t">boolean</span> zB = CameraConfig.b(<span class="s">&quot;com.oplus.support.multi.frame.burst.shot.cluster&quot;</span>, <span class="b">false</span>);</div>
<div class="ln" style="top:381px">        <span class="c">String</span> str = path_to_store_photos;</div>
<div class="ln" style="top:398px">        <span class="k">if</span> (cameraPicture != <span class="k">null</span> &amp;&amp; cameraPicture.f14407p &gt; -<span class="n">1</span>) {</div>
<div class="ln" style="top:415px">            <span class="t">int</span> i10 = Util.f15919a;</div>
<div class="ln" style="top:432px">            DeviceUtil.n();</div>
<div class="ln" style="top:449px">            <span class="c">StringBuilder</span> sb2 = <span class="k">new</span> <span class="c">StringBuilder</span>();</div>
<div class="ln" style="top:466px">            sb2.append(str);</div>
<div class="ln" style="top:483px">            <span class="c">String</span> str2 = cameraPicture.f14403n;</div>
<div class="ln" style="top:500px">            sb2.append(str2.substring(str2.indexOf(<span class="s">&quot;Cshot&quot;</span>)));</div>
<div class="ln" style="top:517px">            sb2.append(<span class="c">File</span>.separator);</div>
<div class="ln" style="top:534px">            <span class="t">return</span> sb2.toString();</div>
<div class="ln" style="top:551px">        }</div>
<div class="ln" style="top:568px">        <span class="k">if</span> (cameraPicture == <span class="k">null</span>) {</div>
<div class="ln" style="top:585px">            <span class="t">return</span> str;</div>
<div class="ln" style="top:602px">        }</div>
<div class="ln" style="top:619px">        <span class="k">if</span> (cameraPicture.f14409q &lt;= <span class="n">0</span> &amp;&amp; (cameraPicture.f14411r &lt;= <span class="n">0</span> || !zB)) {</div>
<div class="ln" style="top:636px">            <span class="t">return</span> str;</div>
<div class="ln" style="top:653px">        }</div>
<div class="ln" style="top:670px">        <span class="c">StringBuilder</span> sbC = q0.c(str);</div>
<div class="ln" style="top:687px">        <span class="c">String</span> str3 = cameraPicture.f14403n;</div>
<div class="ln" style="top:704px">        sbC.append(str3.substring(str3.indexOf(<span class="s">&quot;Cshot&quot;</span>)));</div>
<div class="ln" style="top:721px">        sbC.append(<span class="c">File</span>.separator);</div>
<div class="ln" style="top:738px">        <span class="t">return</span> sbC.toString();</div>
<div class="ln" style="top:755px">    }</div>
<div class="ln" style="top:772px"></div>
<div class="ln" style="top:789px">    <span class="k">public</span> <span class="k">static</span> <span class="k">void</span> C(<span class="c">String</span> str) {</div>
<div class="ln" style="top:806px">        <span class="k">if</span> (f18211t || <span class="k">new</span> <span class="c">File</span>(str).exists()) {</div>
<div class="ln" style="top:823px">            <span class="t">return</span>;</div>
<div class="ln" style="top:840px">        }</div>
<div class="ln" style="top:857px">        DocumentUtil.c(str);</div>
<div class="ln" style="top:874px">    }</div>
<div class="ln" style="top:891px"></div>
<div class="ln" style="top:908px"></div>
<div id="csb"></div><div id="cthumb"></div>
</div><div class="abs" style="left:0;top:0;width:1473px;height:4px;background:linear-gradient(#c2c2c2 0,#c2c2c2 1.3px,#d8d8d8 1.3px,#d8d8d8 2.2px,#c6c6c6 2.2px,#c6c6c6 3.3px,#ececec 3.3px)"></div></div>
<div class="abs" style="left:447px;top:922px;width:1473px;height:2.5px;background:#c9c9c9"></div>
<div class="abs" style="left:447px;top:924px;width:94px;height:5px;background:#98b8dc"></div>
<div class="abs" style="left:1752px;top:131px;width:108px;height:4.5px;background:#98b8dc"></div>
<div class="abs" style="left:930px;top:938.3px;width:20px;height:20px;border:1.5px solid #adadad;border-radius:4px;background:#fff"></div>
<div class="bt" style="left:4.7px;top:949px;letter-spacing:0.05px">Issues:</div>
<div class="bt" style="left:312px;top:949px;letter-spacing:0.78px">1 warnings</div>
<div class="bt" style="left:465px;top:936.5px;letter-spacing:0.93px">Code</div>
<div class="bt" style="left:559.2px;top:936.5px;letter-spacing:0.35px">Smali</div>
<div class="bt" style="left:654.6px;top:936.5px;letter-spacing:0.68px">Simple</div>
<div class="bt" style="left:763.6px;top:936.5px;letter-spacing:0.57px">Fallback</div>
<div class="bt" style="left:957px;top:935.5px;letter-spacing:0.55px">Split view</div>
</body></html>
